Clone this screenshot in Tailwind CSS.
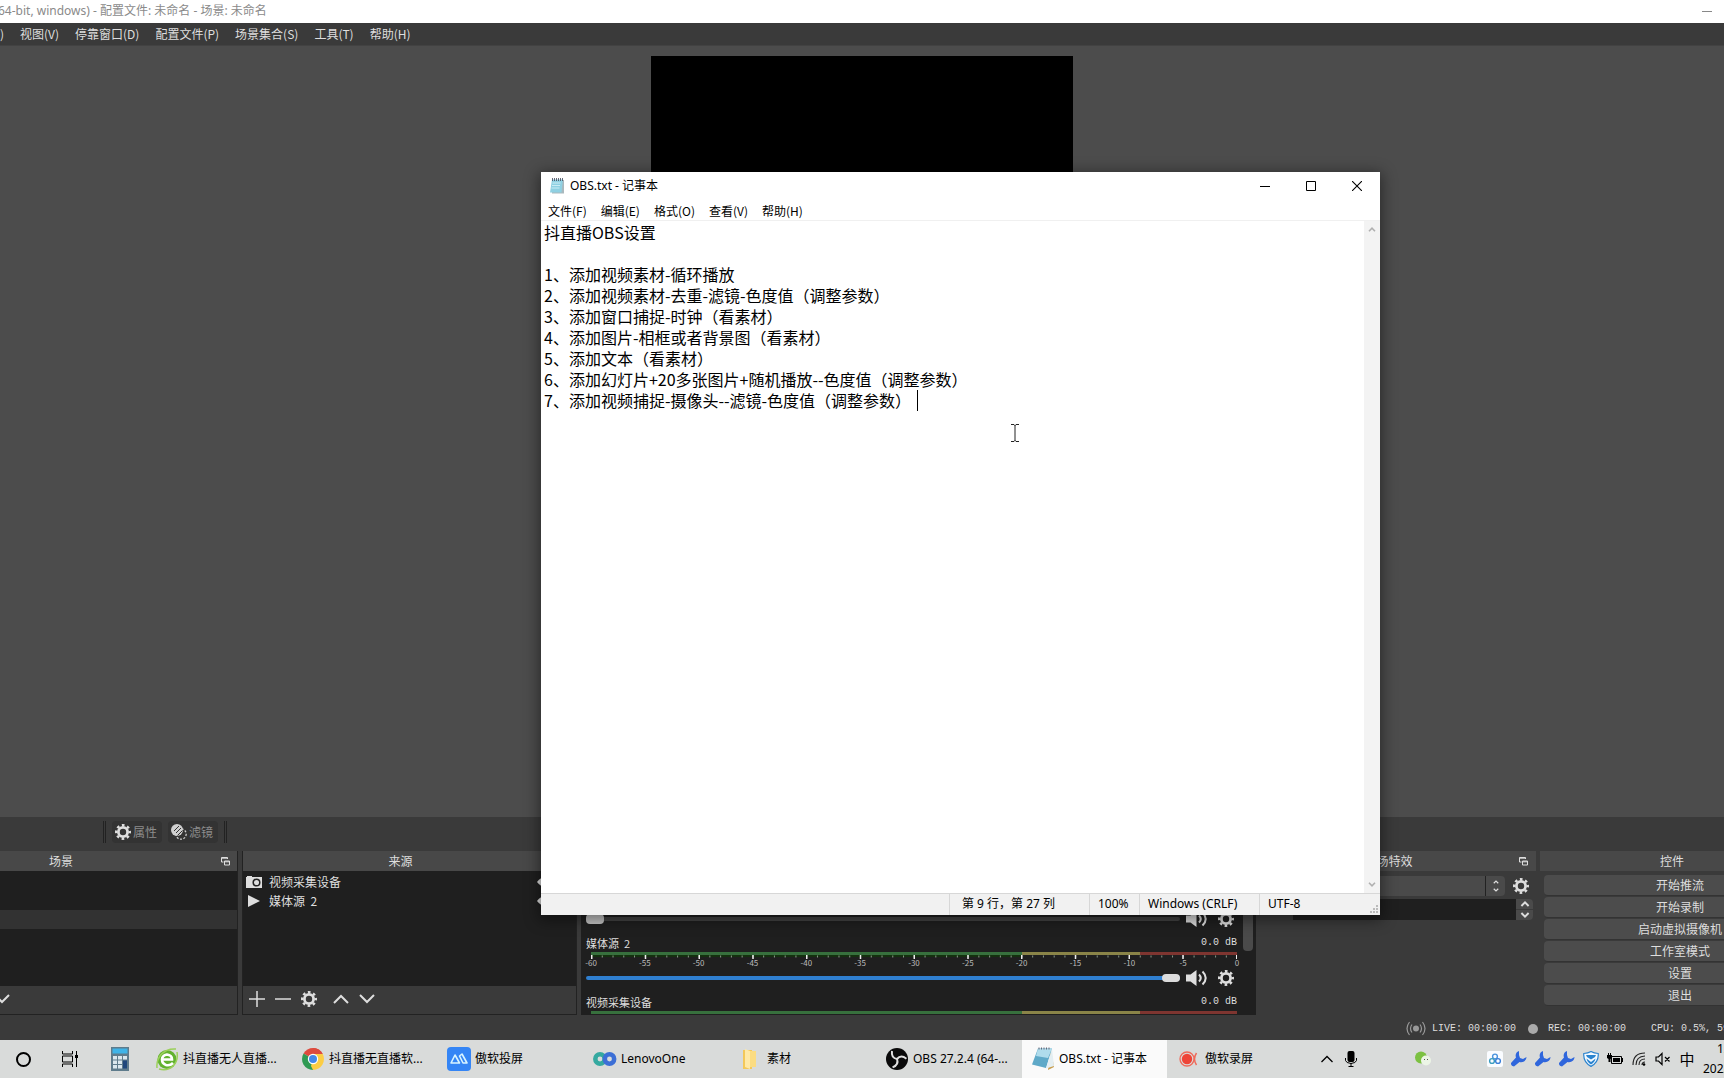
<!DOCTYPE html>
<html lang="zh-CN">
<head>
<meta charset="utf-8">
<title>OBS</title>
<script src="https://cdn.jsdelivr.net/npm/@tailwindcss/browser@4"></script>
</head>
<body class="relative flex h-screen min-h-[900px] flex-col overflow-hidden bg-[#3a3a3a] font-['Noto_Sans_CJK_SC',sans-serif] text-xs text-[#dedede]">

<svg class="hidden">
  <symbol id="gear" viewBox="0 0 16 16"><circle cx="8" cy="8" r="4.6" fill="none" stroke="currentColor" stroke-width="2.8"/><circle cx="8" cy="8" r="6.8" fill="none" stroke="currentColor" stroke-width="2.4" stroke-dasharray="2.67 2.67" stroke-dashoffset="1.33"/></symbol>
  <symbol id="float" viewBox="0 0 9 9"><path d="M.5 5V.5h6V2M.5 1.2h6M.5 5h2M3.5 4h5v4h-5zM3.5 4.8h5" fill="none" stroke="currentColor"/></symbol>
  <symbol id="up" viewBox="0 0 16 10"><path d="M1 9l7-7 7 7" fill="none" stroke="currentColor" stroke-width="2"/></symbol>
  <symbol id="down" viewBox="0 0 16 10"><path d="M1 1l7 7 7-7" fill="none" stroke="currentColor" stroke-width="2"/></symbol>
  <symbol id="upsmall" viewBox="0 0 8 5"><path d="M1 4.200l3-3 3 3" fill="none" stroke="currentColor" stroke-width="1.600"/></symbol>
  <symbol id="downsmall" viewBox="0 0 8 5"><path d="M1 .8l3 3 3-3" fill="none" stroke="currentColor" stroke-width="1.600"/></symbol>
  <symbol id="speaker" viewBox="0 0 22 16"><path d="M0 4.500h4.500L10.500 0v16l-6-4.500H0z" fill="currentColor"/><path d="M13 4.500q3.500 3.500 0 7M16.500 1.500q6.500 6.500 0 13" fill="none" stroke="currentColor" stroke-width="2"/></symbol>
  <symbol id="eye" viewBox="0 0 16 10"><path d="M0 5q8-10 16 0-8 10-16 0z" fill="currentColor"/><circle cx="8" cy="5" r="2.500" fill="#1f1f1f"/></symbol>
  <symbol id="ticks" viewBox="0 0 646 5"><path d="M0 1.500h646" fill="none" stroke="#8a9a8a" stroke-width="2" stroke-dasharray="1 9.760"/><path d="M0 2h647" fill="none" stroke="#eee" stroke-width="4" stroke-dasharray="1.500 52.250"/></symbol>
  <symbol id="wrench" viewBox="0 0 16 16"><path d="M8 0C5 1 4 4 5 6.500L0 12q-.5 3 3 3.500l5.500-4.500C12 12 15.500 9.500 15.500 6L12 8 9 7 8 4z" fill="#2f66dc"/></symbol>
  <symbol id="notepad" viewBox="0 0 24 24"><path d="M20 3l3 17-6 3z" fill="#c89c4c"/><path d="M7 1.500h14L15 21 1 17.500z" fill="#5fa9c8"/><path d="M7 1.500h14L17 11 5 9z" fill="#b0dcec"/><path d="M21 2l2 17-8 2.500z" fill="#e4eef2"/><path d="M8 .5v2M10.500 .5v2M13 .5v2M15.500 .5v2M18 .5v2" stroke="#667"/></symbol>
</svg>

<header class="flex h-[23px] shrink-0 items-center bg-white pr-3 pb-px text-[#8a8a8a]">
  <h1 class="-ml-0.5 font-['Noto_Sans','Noto_Sans_CJK_SC',sans-serif] whitespace-nowrap">64-bit, windows) - 配置文件: 未命名 - 场景: 未命名</h1>
  <button aria-label="最小化" class="ml-auto flex h-5 w-2.5 items-center"><span class="h-px w-2.5 bg-[#888]"></span></button>
</header>
<nav class="flex h-[23px] shrink-0 items-center gap-4 border-b border-[#424242] whitespace-nowrap">
  <button class="w-1 overflow-hidden">)</button>
  <button>视图(V)</button><button>停靠窗口(D)</button><button>配置文件(P)</button><button>场景集合(S)</button><button>工具(T)</button><button>帮助(H)</button>
</nav>

<main class="flex min-h-0 flex-1 justify-center bg-[#4c4c4c] pt-2.5 pb-[11px]">
  <div class="aspect-[9/16] h-full bg-black"></div>
</main>

<div class="flex h-[34px] shrink-0 items-center pb-1 pl-[103px] text-[#8c8c8c]">
  <span class="h-[22px] w-[3px] border-x border-[#222]"></span>
  <button class="ml-1.5 flex h-[22px] w-[50px] items-center gap-0.5 rounded-sm bg-[#333] pl-[3px] whitespace-nowrap"><svg class="size-4 text-[#dedede]"><use href="#gear"/></svg>属性</button>
  <button class="ml-1.5 flex h-[22px] w-[50px] items-center gap-0.5 rounded-sm bg-[#333] pl-[3px] whitespace-nowrap">
    <svg class="size-4 text-[#cfcfcf]" viewBox="0 0 16 16"><circle cx="6" cy="6" r="6" fill="currentColor"/><circle cx="10" cy="10" r="5.200" fill="none" stroke="currentColor" stroke-width="1.300" stroke-dasharray="2 1.500"/><path d="M5 9l5-5M6.500 11.500l5-5M3 7l5-5" stroke="#333" stroke-width="1"/></svg>滤镜</button>
  <span class="ml-1.5 h-[22px] w-[3px] border-x border-[#222]"></span>
</div>

<div class="grid h-[164px] shrink-0 grid-cols-[238fr_335fr_675fr_276fr_184fr] gap-1">
  <section class="flex min-w-0 flex-col border-r border-b border-[#222]">
    <h2 class="flex h-5 items-center justify-between bg-[#484848] pr-[7px] pl-[49px]">场景<svg class="size-[9px]"><use href="#float"/></svg></h2>
    <div class="flex-1 bg-[#1f1f1f] pt-[39px]"><div class="h-[19px] bg-[#323232]"></div></div>
    <div class="flex h-7 items-center pb-0.5"><button aria-label="下移" class="-ml-1.5"><svg class="h-2.5 w-4"><use href="#down"/></svg></button></div>
  </section>

  <section class="flex min-w-0 flex-col border-x border-b border-[#222]">
    <h2 class="flex h-5 items-center justify-center bg-[#484848] pr-[18px]">来源</h2>
    <ul class="flex-1 bg-[#1f1f1f] pt-px">
      <li class="flex h-[19px] items-center gap-[7px] pr-[23px] pl-[3px]"><svg class="h-3 w-4" viewBox="0 0 16 12"><path d="M0 1h1V0h5v1h10v11H0z" fill="currentColor"/><circle cx="10.500" cy="6.500" r="3.300" fill="none" stroke="#222" stroke-width="1.500"/></svg>视频采集设备<svg class="ml-auto h-2.5 w-4"><use href="#eye"/></svg></li>
      <li class="flex h-[19px] items-center gap-[7px] pr-[23px] pl-[3px]"><svg class="h-3 w-4" viewBox="0 0 16 12"><path d="M2 0l12 6-12 6z" fill="currentColor"/></svg>媒体源&nbsp; 2<svg class="ml-auto h-2.5 w-4"><use href="#eye"/></svg></li>
    </ul>
    <div class="flex h-7 items-center gap-2.5 pb-0.5 pl-1.5">
      <button aria-label="添加"><svg class="size-4" viewBox="0 0 16 16"><path d="M0 8h16M8 0v16" stroke="currentColor" stroke-width="1.500"/></svg></button>
      <button aria-label="移除"><svg class="size-4" viewBox="0 0 16 16"><path d="M0 8h16" stroke="currentColor" stroke-width="1.500"/></svg></button>
      <button aria-label="属性"><svg class="size-4"><use href="#gear"/></svg></button>
      <button aria-label="上移" class="ml-1.5"><svg class="h-2.5 w-4"><use href="#up"/></svg></button>
      <button aria-label="下移"><svg class="h-2.5 w-4"><use href="#down"/></svg></button>
    </div>
  </section>

  <section class="flex min-w-0 flex-col text-[11px]">
    <h2 class="h-5 shrink-0 bg-[#484848] text-center text-xs">混音器</h2>
    <div class="relative flex min-h-0 flex-1 flex-col overflow-hidden bg-[#1f1f1f] pt-[40px] pr-[19px] pl-[5px]">
      <div class="absolute top-0 right-[3px] h-20 w-2.5 rounded-b bg-[#4a4a4a]"></div>
      <div class="flex h-4 shrink-0 items-center">
        <input aria-label="桌面音频" type="range" min="0" max="100" value="0" class="h-1 min-w-0 flex-1 appearance-none rounded bg-[#424242] [&::-webkit-slider-thumb]:h-2.5 [&::-webkit-slider-thumb]:w-[18px] [&::-webkit-slider-thumb]:appearance-none [&::-webkit-slider-thumb]:rounded-sm [&::-webkit-slider-thumb]:bg-[#c4c4c4]">
        <svg class="ml-1.5 h-4 w-[22px]"><use href="#speaker"/></svg><svg class="mr-[3px] ml-2.5 size-4"><use href="#gear"/></svg>
      </div>
      <div class="mt-2 flex h-4 shrink-0 items-center justify-between"><span>媒体源&nbsp; 2</span><span class="font-['Liberation_Mono',monospace] text-[10px]">0.0 dB</span></div>
      <div class="mt-px ml-[5px] shrink-0">
        <div class="h-[3px] bg-[linear-gradient(90deg,#37703d_0_66.700%,#8a8448_66.700%_85%,#7e3530_85%)]"></div>
        <div class="h-1 bg-[linear-gradient(#14300f,#14300f)] bg-[length:66.700%_2px] bg-no-repeat"><svg class="block h-[5px] w-full overflow-visible" preserveAspectRatio="none"><use href="#ticks"/></svg></div>
        <div class="flex h-2 justify-between text-[8px] leading-[8px] text-[#bbb]">
          <span class="flex w-0 justify-center">-60</span><span class="flex w-0 justify-center">-55</span><span class="flex w-0 justify-center">-50</span><span class="flex w-0 justify-center">-45</span><span class="flex w-0 justify-center">-40</span><span class="flex w-0 justify-center">-35</span><span class="flex w-0 justify-center">-30</span><span class="flex w-0 justify-center">-25</span><span class="flex w-0 justify-center">-20</span><span class="flex w-0 justify-center">-15</span><span class="flex w-0 justify-center">-10</span><span class="flex w-0 justify-center">-5</span><span class="flex w-0 justify-center">0</span>
        </div>
      </div>
      <div class="mt-[3px] flex h-4 shrink-0 items-center">
        <input aria-label="媒体源 2" type="range" min="0" max="100" value="100" class="h-1 min-w-0 flex-1 appearance-none rounded bg-[#2f7fd0] [&::-webkit-slider-thumb]:h-2 [&::-webkit-slider-thumb]:w-[18px] [&::-webkit-slider-thumb]:appearance-none [&::-webkit-slider-thumb]:rounded-sm [&::-webkit-slider-thumb]:bg-[#dcdcdc]">
        <svg class="ml-1.5 h-4 w-[22px]"><use href="#speaker"/></svg><svg class="mr-[3px] ml-2.5 size-4"><use href="#gear"/></svg>
      </div>
      <div class="mt-2 flex h-4 shrink-0 items-center justify-between"><span>视频采集设备</span><span class="font-['Liberation_Mono',monospace] text-[10px]">0.0 dB</span></div>
      <div class="mt-px ml-[5px] h-[3px] shrink-0 bg-[linear-gradient(90deg,#37703d_0_66.700%,#8a8448_66.700%_85%,#7e3530_85%)]"></div>
    </div>
  </section>

  <section class="min-w-0">
    <h2 class="flex h-5 items-center bg-[#484848] pr-2"><span class="flex-1 pr-0.5 text-center">转场特效</span><svg class="size-[9px]"><use href="#float"/></svg></h2>
    <div class="mt-[5px] flex h-5 items-center pr-[7px] pl-1">
      <select aria-label="转场" class="h-full min-w-0 flex-1 appearance-none rounded-l-sm bg-[#4a4a4a]"><option></option></select>
      <span class="flex h-full w-5 flex-col items-center justify-center gap-1 rounded-r-sm border-l border-[#222] bg-[#4a4a4a]"><svg class="h-1 w-1.5"><use href="#upsmall"/></svg><svg class="h-1 w-1.5"><use href="#downsmall"/></svg></span>
      <button aria-label="转场属性" class="ml-2 size-4"><svg class="size-4"><use href="#gear"/></svg></button>
    </div>
    <div class="mt-[3px] flex h-[21px] pr-[3px] pl-2">
      <label for="dur" class="w-[25px] whitespace-nowrap">时长</label>
      <input id="dur" type="text" class="min-w-0 flex-1 bg-[#1f1f1f]">
      <span class="flex w-[17px] flex-col gap-px"><button aria-label="增加" class="flex flex-1 items-center justify-center rounded-tr bg-[#4a4a4a]"><svg class="h-1.5 w-2.5"><use href="#upsmall"/></svg></button><button aria-label="减少" class="flex flex-1 items-center justify-center rounded-br bg-[#4a4a4a]"><svg class="h-1.5 w-2.5"><use href="#downsmall"/></svg></button></span>
    </div>
  </section>

  <section class="min-w-0 overflow-hidden">
    <div class="w-[276px]">
      <h2 class="flex h-5 items-center justify-center bg-[#484848] pr-3">控件</h2>
      <div class="mt-1 grid auto-rows-[21px] gap-px pl-1">
        <button class="rounded-sm border-b border-[#333] bg-[#4c4c4c]">开始推流</button>
        <button class="rounded-sm border-b border-[#333] bg-[#4c4c4c]">开始录制</button>
        <button class="rounded-sm border-b border-[#333] bg-[#4c4c4c]">启动虚拟摄像机</button>
        <button class="rounded-sm border-b border-[#333] bg-[#4c4c4c]">工作室模式</button>
        <button class="rounded-sm border-b border-[#333] bg-[#4c4c4c]">设置</button>
        <button class="rounded-sm border-b border-[#333] bg-[#4c4c4c]">退出</button>
      </div>
    </div>
  </section>
</div>

<div class="flex h-[25px] shrink-0 items-center justify-end overflow-hidden pt-0.5 font-['Liberation_Mono',monospace] text-[10px] whitespace-nowrap">
  <svg class="mr-1.5 h-[15px] w-5 text-[#999]" viewBox="0 0 20 15"><circle cx="10" cy="7.500" r="3" fill="currentColor"/><path d="M6 3.500q-3 4 0 8M14 3.500q3 4 0 8M3.500 1q-5 6.500 0 13M16.500 1q5 6.500 0 13" fill="none" stroke="currentColor" stroke-width="1.200"/></svg>
  <span>LIVE: 00:00:00</span>
  <span class="mr-2.5 ml-3 size-2.5 rounded-full bg-[#aaa]"></span>
  <span>REC: 00:00:00</span>
  <span class="ml-[25px] w-[73px]">CPU: 0.5%, 59.94 fps</span>
</div>

<footer class="flex h-[38px] shrink-0 items-stretch overflow-hidden bg-[#d9dbda] font-['Noto_Sans','Noto_Sans_CJK_SC',sans-serif] whitespace-nowrap text-black">
  <button aria-label="Cortana" class="flex w-[46px] items-center justify-center"><span class="size-[15px] rounded-full border-2 border-black"></span></button>
  <button aria-label="任务视图" class="flex w-12 items-center justify-center"><svg class="size-4" viewBox="0 0 16 16"><path d="M.5 0v3h10V0M.5 16v-3h10v3M.5 5h10v6H.5zM14.500 0v16" fill="none" stroke="#000"/><path d="M13 4h3v3h-3z"/></svg></button>
  <button aria-label="计算器" class="flex w-[52px] items-center justify-center"><svg class="h-6 w-[18px]" viewBox="0 0 18 24"><path d="M0 0h18v24H0z" fill="#5f7c8c"/><path d="M1.500 1.500h15v5h-15z" fill="#3fb4e8"/><path d="M2 9h4v3.500H2zM7 9h4v3.500H7zM12 9h4v3.500h-4zM2 13.500h4V17H2zM7 13.500h4V17H7zM2 18h4v3.500H2zM7 18h4v3.500H7z" fill="#dbe8ee"/><path d="M12 13.500h4v8h-4z" fill="#1f477c"/></svg></button>
  <button class="mr-px flex w-[145px] items-center gap-1 pl-[9px]"><svg class="size-6" viewBox="0 0 24 24"><circle cx="12" cy="12.500" r="9.500" fill="#62b22f"/><path d="M2 21C1 11 8 1 21 2M4 22C15 25 24 17 22 5" stroke="#9bd05a" stroke-width="1.500" fill="none"/><path d="M18 16q-3 3-7 2-4-1.500-4-5.500t5-5q5 .5 5 5H8" fill="none" stroke="#fff" stroke-width="2.600"/></svg>抖直播无人直播...</button>
  <button class="mr-px flex w-[145px] items-center gap-1 pl-[9px]"><svg class="size-6" viewBox="0 0 24 24"><path d="M12 12L2.500 6.500a11 11 0 0 1 19 0z" fill="#dd4b3e"/><path d="M12 12l9.500-5.500A11 11 0 0 1 12 23z" fill="#fccd44"/><path d="M12 12v11A11 11 0 0 1 2.500 6.500z" fill="#2f9a53"/><path d="M12 7h9.800l-2 5H12zM12 12l4.500 3L12 23l-2-4z" fill="#fccd44"/><path d="M12 1a11 11 0 0 1 9.800 6H12z" fill="#dd4b3e"/><circle cx="12" cy="12" r="5.200" fill="#fff"/><circle cx="12" cy="12" r="4" fill="#4488e8"/></svg>抖直播无直播软...</button>
  <button class="mr-px flex w-[145px] items-center gap-1 pl-[9px]"><svg class="size-6" viewBox="0 0 24 24"><rect width="24" height="24" rx="4" fill="#3485f5"/><path d="M4 16l4-8 4.500 8zM12.500 9l2.500-2 5 9h-4z" fill="none" stroke="#d8f4ff" stroke-width="1.600" stroke-linejoin="round"/></svg>傲软投屏</button>
  <button class="mr-px flex w-[145px] items-center gap-1 pl-[9px]"><svg class="size-6" viewBox="0 0 24 24" fill="none" stroke-width="4.500"><circle cx="7" cy="12" r="4.700" stroke="#35a9a0"/><circle cx="16.500" cy="12" r="4.700" stroke="#3c6fd6"/></svg>LenovoOne</button>
  <button class="mr-px flex w-[145px] items-center gap-1 pl-[9px]"><svg class="size-6" viewBox="0 0 24 24"><path d="M4 3h9v19H4z" fill="#f3c85a"/><path d="M6 2l5 2v18l-5-2z" fill="#ffe9a6"/><path d="M11 4h6v16h-6z" fill="#fbdc82"/></svg>素材</button>
  <button class="mr-px flex w-[145px] items-center gap-1 pl-[9px]"><svg class="size-6" viewBox="0 0 24 24"><circle cx="12" cy="12" r="11" fill="#0a0a0a"/><g fill="none" stroke="#e0e0e0" stroke-width="2"><path d="M7 4q-1 7 5 8"/><path d="M7 4q-1 7 5 8" transform="rotate(120 12 12)"/><path d="M7 4q-1 7 5 8" transform="rotate(240 12 12)"/></g></svg>OBS 27.2.4 (64-...</button>
  <button class="mr-px flex w-[145px] items-center gap-1 bg-[#fafafa] pl-[9px]"><svg class="size-6"><use href="#notepad"/></svg>OBS.txt - 记事本</button>
  <button class="flex w-[145px] items-center gap-1 pl-[9px]"><svg class="size-6" viewBox="0 0 24 24"><circle cx="10" cy="12" r="7" fill="none" stroke="#ef6a5a" stroke-width="1.300"/><circle cx="10" cy="12" r="5.200" fill="#ee4437"/><path d="M19.500 6q-4 6 0 12" fill="none" stroke="#ee6a5a" stroke-width="1.500"/></svg>傲软录屏</button>
  <div class="ml-auto flex items-center">
    <button aria-label="显示隐藏的图标" class="flex w-6 justify-center"><svg class="h-2 w-3" viewBox="0 0 12 8"><path d="M.5 7L6 1.500 11.500 7" fill="none" stroke="#000" stroke-width="1.300"/></svg></button>
    <span class="flex w-6 justify-center"><svg class="h-4 w-3" viewBox="0 0 12 16"><rect x="2.500" width="7" height="11" rx="2"/><path d="M.5 7v2.500Q1 12 6 12.500q5-.5 5.500-3V7M6 12v4M3.500 15.500h5" fill="none" stroke="#000"/></svg></span>
    <span class="mx-12 flex w-6 justify-center"><svg class="size-4" viewBox="0 0 16 16"><circle cx="6" cy="6.500" r="6" fill="#7cc142"/><circle cx="11" cy="9.500" r="5" fill="#ecf5e6"/><path d="M9 8.500h1M12 8.500h1" stroke="#555"/></svg></span>
    <span class="flex w-6 justify-center"><svg class="size-4" viewBox="0 0 16 16"><rect width="16" height="16" rx="2" fill="#fafcff"/><g fill="none" stroke-width="1.400"><circle cx="8" cy="5.500" r="2.400" stroke="#4a93dd"/><circle cx="5" cy="10" r="2.400" stroke="#3a9cc0"/><circle cx="11" cy="10" r="2.400" stroke="#3b7fd8"/></g></svg></span>
    <span class="flex w-6 justify-center"><svg class="size-4"><use href="#wrench"/></svg></span>
    <span class="flex w-6 justify-center"><svg class="size-4"><use href="#wrench"/></svg></span>
    <span class="flex w-6 justify-center"><svg class="size-4"><use href="#wrench"/></svg></span>
    <span class="flex w-6 justify-center"><svg class="size-4" viewBox="0 0 16 16"><path d="M8 .6Q11 2.500 15.200 2.500 16 11 8 15.400 0 11 .8 2.500 5 2.500 8 .6z" fill="#f4faff" stroke="#2b84cf" stroke-width="1.200"/><path d="M3 4h10l-1 2-4 2.500L4 6zM3.500 7.500L8 11l4.500-3.500Q12 11 8 13.500 4 11 3.500 7.500z" fill="#2b84cf"/></svg></span>
    <span class="flex w-6 justify-center"><svg class="h-3 w-4" viewBox="0 0 16 12"><path d="M4.500 3.500h10v7h-10z" fill="none" stroke="#000"/><path d="M6 5h7v4H6zM15 5h1v4h-1zM0 2h5v3L3.500 6v3h-2V6L0 5zM1 0h1v2H1zM3 0h1v2H3z"/></svg></span>
    <span class="flex w-6 justify-center"><svg class="size-3.5" viewBox="0 0 14 14"><path d="M1 13Q1 1 13 1M4 13q0-8.500 9-9M7 13q0-6 6-6M10 13q0-3 3-3" fill="none" stroke="#222" stroke-width="1.100"/><circle cx="12" cy="12.500" r="1.300"/></svg></span>
    <span class="flex w-6 justify-center"><svg class="h-3.5 w-4" viewBox="0 0 16 14"><path d="M1 5h2.500L7 1.500v11L3.500 9H1zM10 5l4.500 4.500M14.500 5L10 9.500" fill="none" stroke="#000" stroke-width="1.200"/></svg></span>
    <span class="flex w-6 justify-center text-[15px]">中</span>
    <time class="flex w-[25px] flex-col pl-1 leading-5"><span class="pl-3.5">12:08</span><span>2022/4/20</span></time>
  </div>
</footer>

<section class="absolute top-[172px] left-[541px] flex h-[743px] w-[839px] flex-col bg-white text-black shadow-[0_3px_14px_2px_rgba(0,0,0,0.45)]">
  <div class="flex h-[29px] shrink-0 items-center gap-[5px] pr-[18px] pb-px pl-2">
    <svg class="size-4" viewBox="0 0 16 16"><path d="M3 2h12v13.500H3z" fill="#aab8bd"/><path d="M3 1.500h11L12.500 14.500H1z" fill="#8fd0e2"/><path d="M3.500 5h8M3 7.500h8M2.500 10h8" stroke="#c9ecf5"/><path d="M3.500 0v3M5.500 0v3M7.500 0v3M9.500 0v3M11.500 0v3M13.500 0v3" stroke="#445" stroke-width=".8"/></svg>
    <h2 class="flex-1 font-['Noto_Sans','Noto_Sans_CJK_SC',sans-serif]">OBS.txt - 记事本</h2>
    <div class="flex items-center gap-9">
      <button aria-label="最小化"><svg class="size-2.5" viewBox="0 0 10 10"><path d="M0 5.500h10" stroke="#000"/></svg></button>
      <button aria-label="最大化"><svg class="size-2.5" viewBox="0 0 10 10"><path d="M.5.5h9v9h-9z" fill="none" stroke="#000"/></svg></button>
      <button aria-label="关闭"><svg class="size-2.5" viewBox="0 0 10 10"><path d="M0 0l10 10M10 0L0 10" stroke="#000" stroke-width="1.100"/></svg></button>
    </div>
  </div>
  <nav class="flex h-5 shrink-0 items-center gap-3.5 border-b border-[#f0f0f0] pl-[7px]">
    <button>文件(F)</button><button>编辑(E)</button><button>格式(O)</button><button>查看(V)</button><button>帮助(H)</button>
  </nav>
  <div class="relative flex min-h-0 flex-1">
    <textarea aria-label="文本" spellcheck="false" class="flex-1 resize-none overflow-hidden pt-px pl-[3px] text-base leading-[21px] outline-none">抖直播OBS设置

1、添加视频素材-循环播放
2、添加视频素材-去重-滤镜-色度值（调整参数）
3、添加窗口捕捉-时钟（看素材）
4、添加图片-相框或者背景图（看素材）
5、添加文本（看素材）
6、添加幻灯片+20多张图片+随机播放--色度值（调整参数）
7、添加视频捕捉-摄像头--滤镜-色度值（调整参数）</textarea>
    <span class="absolute top-[169px] left-[376px] h-[21px] w-px bg-black"></span>
    <svg class="absolute top-[203px] left-[470px] h-[18px] w-2" viewBox="0 0 8 18"><path d="M0 .5h3l1 1 1-1h3M4 1v16M0 17.500h3l1-1 1 1h3" fill="none" stroke="#222"/></svg>
    <div class="flex w-4 flex-col items-center justify-between bg-[#f3f3f3] py-1.5 text-[#b0b0b0]"><svg class="h-[5px] w-2"><use href="#upsmall"/></svg><svg class="h-[5px] w-2"><use href="#downsmall"/></svg></div>
  </div>
  <div class="flex h-[22px] shrink-0 items-stretch justify-end border-t border-[#d7d7d7] bg-[#f1f1f1] font-['Noto_Sans','Noto_Sans_CJK_SC',sans-serif] leading-5 whitespace-nowrap">
    <span class="w-[140px] border-l border-[#d7d7d7] pl-3">第 9 行，第 27 列</span>
    <span class="w-[50px] border-l border-[#d7d7d7] pl-2">100%</span>
    <span class="w-[120px] border-l border-[#d7d7d7] pl-2">Windows (CRLF)</span>
    <span class="flex w-[121px] justify-between border-l border-[#d7d7d7] pl-2">UTF-8<svg class="m-0.5 size-2 self-end" viewBox="0 0 8 8"><path d="M6 0h2v2H6zM3 3h2v2H3zM6 3h2v2H6zM0 6h2v2H0zM3 6h2v2H3zM6 6h2v2H6z" fill="#bbb"/></svg></span>
  </div>
</section>
</body>
</html>
